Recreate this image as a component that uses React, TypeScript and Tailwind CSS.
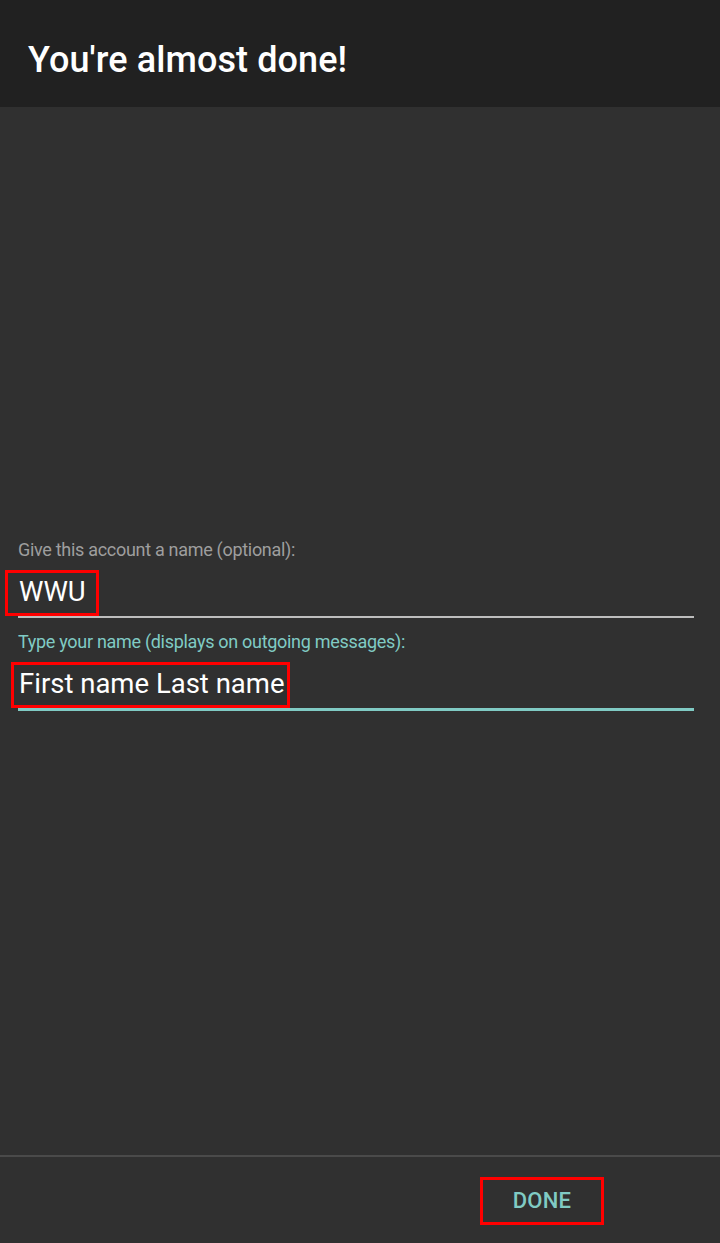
import React from 'react'

const font = { fontFamily: 'Roboto, "Noto Sans", sans-serif' }

function Field({
	label,
	value,
	active,
	boxClass,
}: {
	label: string
	value: string
	active?: boolean
	boxClass: string
}) {
	return (
		<div className="flex flex-col">
			<div className={`text-[18px] leading-[22px] tracking-[-0.3px] ${active ? 'text-[#80cbc4]' : 'text-[#9e9e9e]'}`}>
				{label}
			</div>
			<div className="relative mt-[5px] h-[50px] flex items-center">
				<span className="relative text-[27.5px] leading-[32px] text-white pl-[1px] mt-[2px]">
					{value}
					<span className={`absolute border-[3px] border-[#ff0000] ${boxClass}`} />
				</span>
			</div>
			<div className={active ? 'h-[3px] bg-[#80cbc4]' : 'h-[2px] bg-[#bdbdbd]'} />
		</div>
	)
}

export default function App() {
	return (
		<div className="w-[720px] h-[1243px] flex flex-col bg-[#303030] overflow-hidden" style={font}>
			<header className="h-[107px] bg-[#212121] flex items-center pl-[28px] shrink-0">
				<h1 className="text-[36px] font-medium text-white tracking-[0.1px] mt-[12px]">You're almost done!</h1>
			</header>

			<main className="flex-1 flex flex-col pt-[432px] pl-[18px] pr-[26px] gap-[13px]">
				<Field
					label="Give this account a name (optional):"
					value="WWU"
					boxClass="-left-[13px] -right-[13px] -top-[6px] -bottom-[8px]"
				/>
				<Field
					label="Type your name (displays on outgoing messages):"
					value="First name Last name"
					active
					boxClass="-left-[7px] -right-[5px] -top-[6px] -bottom-[8px]"
				/>
			</main>

			<footer className="h-[88px] shrink-0 border-t-2 border-[#4a4a4a] flex items-center justify-end pr-[116px]">
				<button className="w-[124px] h-[48px] border-[3px] border-[#ff0000] flex items-center justify-center text-[22px] font-medium text-[#80cbc4] tracking-[0.2px] mt-[1px]">
					DONE
				</button>
			</footer>
		</div>
	)
}
